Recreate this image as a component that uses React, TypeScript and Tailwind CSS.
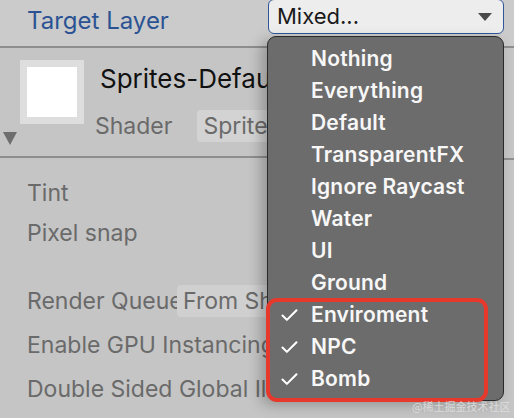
import { Check } from 'lucide-react';

const LAYERS = [
  { name: 'Nothing', checked: false },
  { name: 'Everything', checked: false },
  { name: 'Default', checked: false },
  { name: 'TransparentFX', checked: false },
  { name: 'Ignore Raycast', checked: false },
  { name: 'Water', checked: false },
  { name: 'UI', checked: false },
  { name: 'Ground', checked: false },
  { name: 'Enviroment', checked: true },
  { name: 'NPC', checked: true },
  { name: 'Bomb', checked: true },
];

export default function App() {
  return (
    <div className="relative w-[514px] h-[418px] overflow-hidden bg-[#c5c5c5] font-['Inter',sans-serif] whitespace-nowrap">
      {/* Header row */}
      <div className="h-[48px] bg-[#cbcbcb] border-b-2 border-[#8e8e8e] flex items-start">
        <div className="pl-[27px] pt-[3px] w-[268px] text-[24px] text-[#2b5394]">Target Layer</div>
        <div className="w-[236px] h-[35px] -mt-[1px] rounded-md border-[1.5px] border-[#2e5698] bg-[#ededed] flex items-center justify-between pl-[8px] pr-[11px]">
          <span className="text-[22px] text-[#1a1a1a]">Mixed...</span>
          <span className="w-0 h-0 border-l-[7px] border-r-[7px] border-t-[8px] border-l-transparent border-r-transparent border-t-[#4a4a4a]" />
        </div>
      </div>

      {/* Material header */}
      <div className="relative h-[110px] w-[268px] overflow-hidden flex pt-[12px] border-b-2 border-[#8e8e8e]">
        <div className="ml-[20px] w-[64px] h-[64px] shrink-0 bg-[#dedede] p-[7px]">
          <div className="w-full h-full bg-white" />
        </div>
        <div className="ml-[16px] flex flex-col">
          <div className="text-[26px] text-[#111] leading-[32px] mt-[3px]">Sprites-Default</div>
          <div className="flex items-center mt-[14px] -ml-[5px]">
            <span className="text-[23px] text-[#6a6a6a]">Shader</span>
            <span className="ml-[25px] bg-[#d3d3d3] rounded-[4px] px-[6px] h-[32px] flex items-center text-[23px] text-[#6a6a6a]">Sprites/Default</span>
          </div>
        </div>
        <span className="absolute left-[3px] top-[84px] w-0 h-0 border-l-[7px] border-r-[7px] border-t-[13px] border-l-transparent border-r-transparent border-t-[#6e6e6e]" />
      </div>
      {/* border continues under the menu */}
      <div className="absolute left-[268px] top-[158px] w-[246px] h-[2px] bg-[#8e8e8e]" />

      {/* Properties */}
      <div className="w-[268px] overflow-hidden pl-[27px] text-[23px] text-[#6a6a6a]">
        <div className="mt-[18px] h-[40px]">Tint</div>
        <div className="h-[40px]">Pixel snap</div>
        <div className="mt-[23px] h-[44px] flex items-center">
          <span className="w-[150px]">Render Queue</span>
          <span className="bg-[#d0d0d0] rounded-[4px] px-[6px] h-[32px] flex items-center">From Shader</span>
        </div>
        <div className="h-[44px] flex items-center">Enable GPU Instancing</div>
        <div className="h-[44px] flex items-center">Double Sided Global Illumination</div>
      </div>

      {/* Layer menu */}
      <div className="absolute left-[267px] top-[36px] w-[237px] h-[365px] rounded-[9px] bg-[#6c6c6c] border border-[#2a2a2a] shadow-[-6px_4px_14px_rgba(0,0,0,0.25)] pt-[6px]">
        {LAYERS.map(l => (
          <div key={l.name} className="h-[32px] flex items-center">
            <div className="w-[43px] flex justify-end pr-[11px]">
              {l.checked && <Check size={21} strokeWidth={2.4} className="text-white" />}
            </div>
            <span className="text-[21px] font-semibold text-[#f7f7f7] tracking-[0.2px]">{l.name}</span>
          </div>
        ))}
      </div>

      {/* Highlight */}
      <div className="absolute left-[266px] top-[298px] w-[222px] h-[104px] rounded-[11px] border-4 border-[#e6392c]" />

      {/* Watermark */}
      <div className="absolute left-[412px] top-[399px] text-[11px] leading-[14px] text-[#e4e4e4]/80 font-['Noto_Sans_CJK_SC',sans-serif]">@稀土掘金技术社区</div>
    </div>
  );
}
